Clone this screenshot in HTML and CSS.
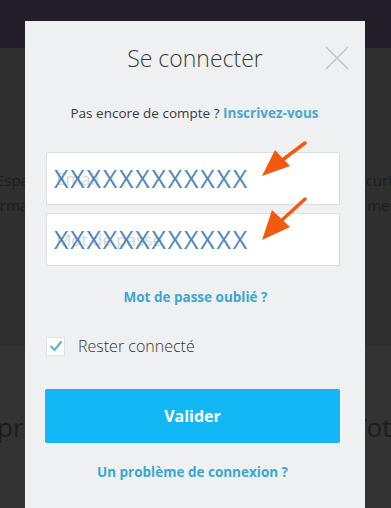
FILE: index.html
```html
<!DOCTYPE html>
<html lang="fr">
<head>
<meta charset="utf-8">
<link rel="stylesheet" href="styles.css">
</head>
<body>
<div class="page">
  <header class="topbar"></header>
  <section class="bg-content">
    <div class="bg-row bg-row-1">
      <p class="bg-left"><span class="l1">Espace</span><span class="l2">Formations</span></p>
      <p class="bg-right"><span class="r1">Sécurisé</span><span class="r2">Nos membres</span></p>
    </div>
    <div class="bg-row bg-row-2">
      <p class="bg-left big"><span class="b1">priorité</span></p>
      <p class="bg-right big"><span class="b2">Votre</span></p>
    </div>
  </section>
</div>

<div class="modal">
  <div class="modal-head">
    <h1 class="title">Se connecter</h1>
    <svg class="close" width="24" height="24" viewBox="0 0 24 24"><path d="M1 1 L23 23 M23 1 L1 23" stroke="#c4c5c8" stroke-width="1.6" fill="none"/></svg>
  </div>
  <p class="signup">Pas encore de compte ? <a class="link">Inscrivez-vous</a></p>

  <div class="field">
    <span class="placeholder">Email</span>
    <span class="value">XXXXXXXXXXXX</span>
    <svg class="arrow" width="50" height="40" viewBox="0 0 50 40"><path d="M46 2 L22 20" stroke="#f25a12" stroke-width="3.5" stroke-linecap="round"/><path d="M3 35 L16 9 L31 25 Z" fill="#f25a12"/></svg>
  </div>
  <div class="field field-2">
    <span class="placeholder">Mot de passe</span>
    <span class="value">XXXXXXXXXXXX</span>
    <svg class="arrow arrow-2" width="50" height="48" viewBox="0 0 50 48"><path d="M46 2 L22 24" stroke="#f25a12" stroke-width="3.5" stroke-linecap="round"/><path d="M3 43 L13 13 L31 30 Z" fill="#f25a12"/></svg>
  </div>

  <p class="forgot"><a class="link">Mot de passe oublié ?</a></p>

  <label class="remember">
    <span class="checkbox"><svg width="14" height="12" viewBox="0 0 14 12"><path d="M1.5 6 L5.5 10 L12.5 1.5" stroke="#58b2ca" stroke-width="2" fill="none"/></svg></span>
    <span class="remember-text">Rester connecté</span>
  </label>

  <button class="submit">Valider</button>

  <p class="problem"><a class="link">Un problème de connexion ?</a></p>
</div>
</body>
</html>
```

FILE: styles.css
```css
* { box-sizing: border-box; }
html, body {
  margin: 0;
  padding: 0;
  width: 391px;
  height: 508px;
  overflow: hidden;
  font-family: "Open Sans", "Noto Sans", sans-serif;
  background: #323232;
}
.page {
  display: flex;
  flex-direction: column;
  height: 508px;
  overflow: hidden;
}
.topbar {
  height: 48px;
  background: #221f2a;
}
.bg-content {
  flex: 1;
  display: flex;
  flex-direction: column;
  background: #2f2f2f;
}
.bg-row {
  display: flex;
  justify-content: space-between;
}
.bg-row-1 {
  padding-top: 120px;
  height: 298px;
}
.bg-row-2 {
  flex: 1;
  background: #333333;
  padding-top: 66px;
}
.bg-left, .bg-right {
  margin: 0;
  color: #1c1c1c;
  font-size: 15px;
  line-height: 25px;
  white-space: nowrap;
  display: flex;
  flex-direction: column;
}
.bg-left { width: 40px; }
.bg-right { width: 40px; }
.l1 { margin-left: -4px; }
.l2 { margin-left: -17px; }
.r1 { margin-left: -2px; }
.r2 { margin-left: -15px; }
.bg-left.big, .bg-right.big {
  font-size: 26px;
  line-height: 30px;
}
.b1 { margin-left: -3px; }
.b2 { margin-left: 0px; }

.modal {
  position: absolute;
  left: 25px;
  top: 21px;
  width: 340px;
  height: 487px;
  background: #eff0f2;
  padding: 0 25px 0 20px;
  display: flex;
  flex-direction: column;
}
.modal-head {
  position: relative;
  display: flex;
  justify-content: center;
  padding-top: 22px;
}
.title {
  margin: 0;
  font-weight: 300;
  font-size: 23px;
  line-height: 30px;
  color: #3a3a3a;
  padding-left: 5px;
}
.close {
  position: absolute;
  right: -9px;
  top: 25px;
}
.signup {
  margin: 31px 0 0;
  text-align: center;
  font-size: 13.5px;
  line-height: 18px;
  color: #3a3a3a;
  padding-left: 4px;
}
.link {
  color: #3ba7cf;
  font-weight: 700;
}
.signup .link { color: #4aa8cf; }

.field {
  position: relative;
  margin-top: 30px;
  height: 53px;
  background: #ffffff;
  border: 1px solid #dcdee2;
  border-radius: 2px;
  margin-left: 1px;
  margin-right: 0;
}
.field-2 { margin-top: 8px; }
.placeholder {
  position: absolute;
  left: 9px;
  top: 14px;
  font-size: 17px;
  color: #d3d6db;
}
.value {
  position: absolute;
  left: 7px;
  top: 9px;
  font-size: 25px;
  line-height: 32px;
  letter-spacing: 1.8px;
  color: #3d7db4;
  opacity: 0.92;
}
.arrow {
  position: absolute;
  left: 212px;
  top: -12px;
}
.arrow-2 { top: -17px; }

.forgot {
  margin: 22px 0 0;
  text-align: center;
  font-size: 13.5px;
  line-height: 18px;
  padding-left: 6px;
}
.remember {
  display: flex;
  align-items: center;
  margin-top: 29px;
  margin-left: 1px;
}
.checkbox {
  width: 19px;
  height: 19px;
  background: #fff;
  border: 1px solid #dfe1e4;
  display: flex;
  align-items: center;
  justify-content: center;
}
.remember-text {
  margin-left: 13px;
  font-size: 16px;
  font-weight: 300;
  color: #333;
}
.submit {
  margin-top: 32px;
  height: 54px;
  background: #12b8f5;
  border: none;
  border-radius: 2px;
  color: #fff;
  font-family: "Open Sans", "Noto Sans", sans-serif;
  font-weight: 700;
  font-size: 16px;
  width: 295px;
}
.problem {
  margin: 19px 0 0;
  text-align: center;
  font-size: 13.5px;
  line-height: 20px;
}
```
